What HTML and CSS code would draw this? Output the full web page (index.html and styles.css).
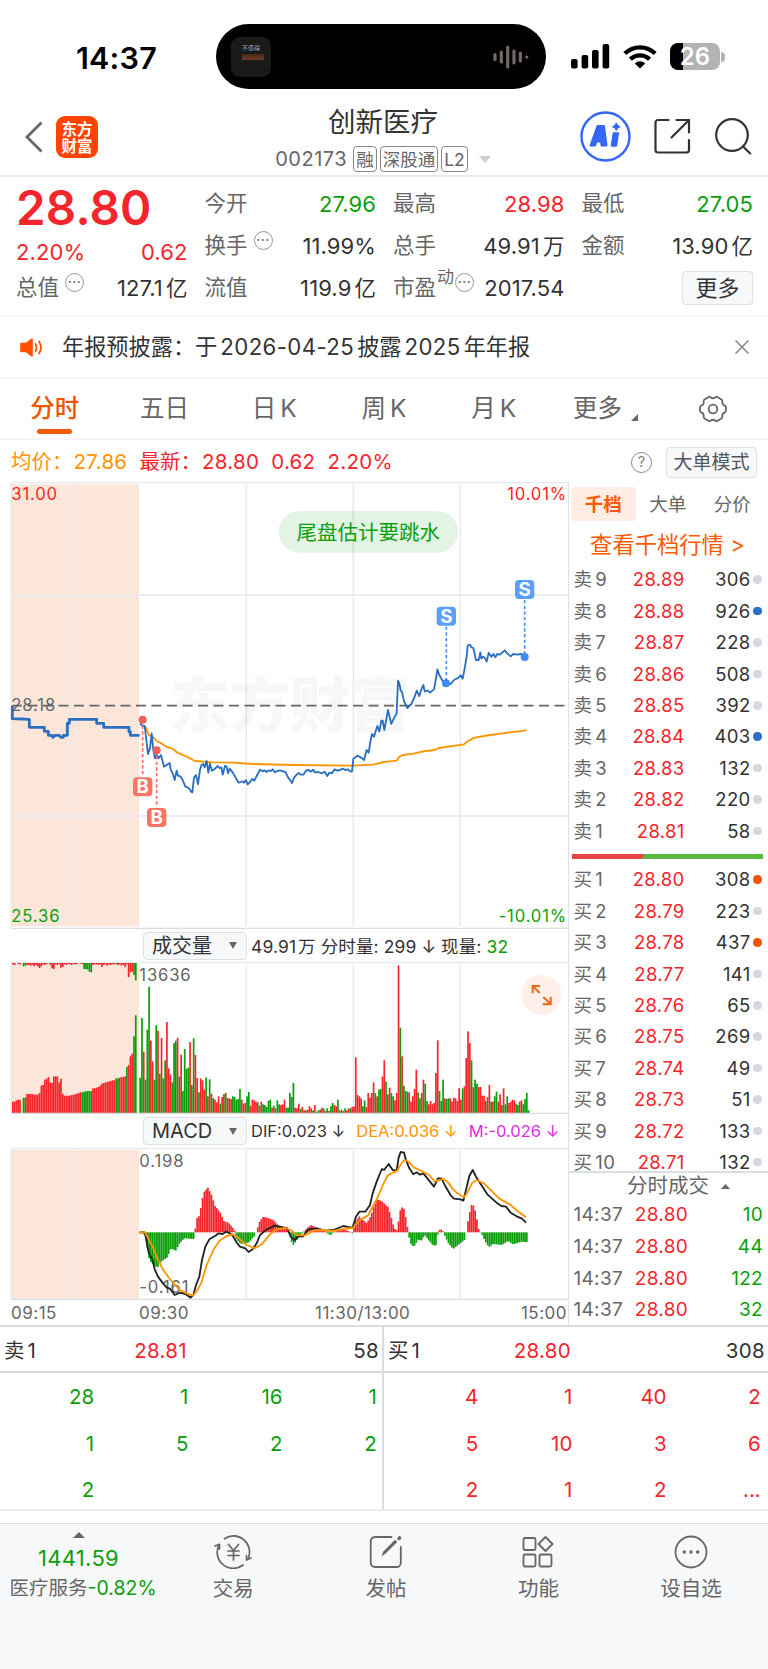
FILE: index.html
```html
<!DOCTYPE html>
<html lang="zh-CN">
<head>
    <meta charset="UTF-8">
    <meta name="viewport" content="width=device-width, initial-scale=1.0">
    <title>创新医疗 002173</title>
    <link rel="stylesheet" href="styles.css">
</head>
<body>

<div class="status-bar">
    <div class="status-time">14:37</div>
    <div class="island">
        <div class="island-cover">
            <span>不值得</span>
            <i></i>
        </div>
        <svg class="wave" width="36" height="24" viewBox="0 0 36 24" stroke="#756763" stroke-width="3.2" stroke-linecap="round">
            <path d="M2 9.5v5M8.3 7v10M14.7 2v20M21 6v12M27.4 8v8M33.8 12v.1"/>
        </svg>
    </div>
    <div class="status-icons">
        <svg width="39" height="25" viewBox="0 0 39 25">
            <rect x="0" y="15" width="6.6" height="9.5" rx="2"/>
            <rect x="10.6" y="11" width="6.6" height="13.5" rx="2"/>
            <rect x="21" y="6" width="6.6" height="18.5" rx="2"/>
            <rect x="31.6" y="0" width="6.6" height="24.5" rx="2"/>
        </svg>
        <svg class="wifi" width="34" height="25" viewBox="0 0 34 25">
            <g fill="none" stroke="#000" stroke-width="4.2">
                <path d="M1.8 9.6a21.5 21.5 0 0 1 30.4 0"/>
                <path d="M7.4 15.3a13.6 13.6 0 0 1 19.2 0"/>
            </g>
            <path d="M17 24.6l-5.2-5.2a7.4 7.4 0 0 1 10.4 0z"/>
        </svg>
        <div class="battery">26</div>
        <i class="battery-cap"></i>
    </div>
</div>

<header class="header">
    <div class="header-left">
        <svg width="18" height="32" viewBox="0 0 18 32" fill="none" stroke="#666" stroke-width="2.8"><path d="M16.5 1.5L2 16l14.500 14.500"/></svg>
        <div class="logo">东方<br>财富</div>
    </div>
    <div class="header-title">
        <h1>创新医疗</h1>
        <div class="code-row">
            <span class="code">002173</span>
            <span class="tag">融</span>
            <span class="tag">深股通</span>
            <span class="tag">L2</span>
            <svg width="12" height="7" viewBox="0 0 12 7"><path fill="#ccc" d="M0 0h12L6 7z"/></svg>
        </div>
    </div>
    <div class="header-right">
        <svg width="51" height="51" viewBox="0 0 51 51">
            <circle cx="25.500" cy="25.500" r="24" fill="none" stroke="#3467f8" stroke-width="2.400"/>
            <path fill="#3467f8" stroke="#3467f8" stroke-width="2" stroke-linejoin="round" fill-rule="evenodd" d="M10.500 34.500L17.500 15h6.500l2.500 19.500h-5l-.4-4h-4.600l-1.400 4zM17.800 26.500h3l-.5-5.500z"/>
            <path fill="#3467f8" stroke="#3467f8" stroke-width="1.600" stroke-linejoin="round" d="M33.500 22h4.800l-2 13h-4.800zM36.300 12.400l1.100 2.200 2.200 1.100-2.200 1.100-1.100 2.200-1.100-2.200-2.200-1.100 2.200-1.100z"/>
        </svg>
        <svg class="share" width="37" height="37" viewBox="0 0 37 37" fill="none" stroke="#333" stroke-width="2.200" stroke-linecap="round">
            <path d="M14.500 2H4a2.500 2.500 0 0 0-2.500 2.500V32A2.500 2.500 0 0 0 4 34.500h28.500A2.500 2.500 0 0 0 35 32V22M22.500 2H35v12.500M34 3L17.500 19.500"/>
        </svg>
        <svg width="37" height="37" viewBox="0 0 37 37" fill="none" stroke="#333" stroke-width="2.200" stroke-linecap="round">
            <circle cx="17" cy="17" r="15.800"/><path d="M28 28.500l7.200 7"/>
        </svg>
    </div>
</header>

<section class="quote">
    <div class="quote-col">
        <div class="price-now">28.80</div>
        <div class="row red low"><span>2.20%</span><span>0.62</span></div>
        <div class="row"><label>总值<i class="dots">···</i></label><span>127.1<b>亿</b></span></div>
    </div>
    <div class="quote-col">
        <div class="row"><label>今开</label><span class="green">27.96</span></div>
        <div class="row"><label>换手<i class="dots">···</i></label><span>11.99%</span></div>
        <div class="row"><label>流值</label><span>119.9<b>亿</b></span></div>
    </div>
    <div class="quote-col">
        <div class="row"><label>最高</label><span class="red">28.98</span></div>
        <div class="row"><label>总手</label><span>49.91<b>万</b></span></div>
        <div class="row"><label>市盈<sup>动</sup><i class="dots tight">···</i></label><span>2017.54</span></div>
    </div>
    <div class="quote-col">
        <div class="row"><label>最低</label><span class="green">27.05</span></div>
        <div class="row"><label>金额</label><span>13.90<b>亿</b></span></div>
        <div class="row end"><button class="more-btn">更多</button></div>
    </div>
</section>

<section class="notice">
    <svg width="23" height="19" viewBox="0 0 23 19">
        <path fill="#ff5000" stroke="#ff5000" stroke-width="1.500" stroke-linejoin="round" d="M1 5.500h5L12 1v17l-6-4.500H1z"/>
        <path fill="none" stroke="#ff5000" stroke-width="1.800" stroke-linecap="round" d="M15.500 6q2 3.500 0 7M19 3.500q4 6 0 12"/>
    </svg>
    <p>年报预披露：于<em>2026-04-25</em>披露<em>2025</em>年年报</p>
    <svg width="14" height="14" viewBox="0 0 14 14" stroke="#888" stroke-width="1.500"><path d="M.5.5l13 13M13.500.5l-13 13"/></svg>
</section>

<nav class="tabs">
    <a class="tab active">分时</a>
    <a class="tab">五日</a>
    <a class="tab">日<u>K</u></a>
    <a class="tab">周<u>K</u></a>
    <a class="tab">月<u>K</u></a>
    <a class="tab tab-more">更多<svg width="7" height="7" viewBox="0 0 7 7"><path fill="#666" d="M7 0v7H0z"/></svg></a>
    <a class="tab">
        <svg width="28" height="28" viewBox="0 0 28 28" fill="none" stroke="#666" stroke-width="1.800" stroke-linejoin="round">
            <path d="M9.500 2.200q1-.9 2 0 2.500 2 5 0 1-.9 2 0l4 2.400q1 .6.800 1.800-.4 3.300 2.500 4.300 1.200.5 1.200 1.800v3q0 1.300-1.200 1.800-2.900 1-2.500 4.300.2 1.200-.8 1.800l-4 2.400q-1 .9-2 0-2.500-2-5 0-1 .9-2 0l-4-2.400q-1-.6-.8-1.800.4-3.300-2.500-4.300Q1 16.800 1 15.500v-3q0-1.300 1.200-1.800 2.900-1 2.500-4.300-.2-1.200.8-1.800z"/>
            <circle cx="14" cy="14" r="4.300"/>
        </svg>
    </a>
</nav>

<div class="info-row">
    <span class="orange avg">均价：<em>27.86</em></span>
    <span class="red">最新：<em>28.80</em><em>0.62</em><em>2.20%</em></span>
    <i class="help">?</i>
    <button class="mode-btn">大单模式</button>
</div>

<main class="panel">
    <div class="charts">
        <svg class="price-chart" viewBox="0 6 1704 1341">
            <rect x="33" y="13" width="384" height="1326" fill="#fce6da"/>
            <path class="grid" d="M33 8H1704M33 345H1704M33 1008H1704M34 8V1345M225 13V1339M739 13V1339M1060 13V1339M1381 13V1339"/>
            <path class="grid dark" d="M33 1345H1704"/>
            <text class="watermark" x="510" y="740">东方财富</text>
            <path class="zero-line" d="M36 677H1704"/>
            <text x="34" y="60" fill="#f22">31.00</text>
            <text x="34" y="692" fill="#666">28.18</text>
            <text x="34" y="1326" fill="#0a9f0a">25.36</text>
            <text x="1701" y="60" fill="#f22" text-anchor="end">10.01%</text>
            <text x="1701" y="1326" fill="#0a9f0a" text-anchor="end">-10.01%</text>
            <polyline class="avg-line" points="434,738 440,748 446,765 458,770 470,783 484,790 500,801 516,805 532,818 560,830 585,843 640,847 700,848 760,852 880,855 1060,857 1120,854 1152,846 1162,845 1190,842 1196,832 1208,825 1240,821 1276,813 1304,810 1316,804 1392,793 1402,784 1424,773 1470,765 1530,757 1579,751"/>
            <polyline class="price-line pre" points="37,678 37,716 64,717 88,718 88,742 133,742 133,754 145,754 145,766 156,766 158,772 165,766 178,766 182,772 190,772 190,766 202,766 202,730 208,730 208,718 290,718 290,730 311,730 311,742 387,742 387,755 391,755 391,766 419,766"/>
            <polyline class="price-line" points="420,730 428,738 434,738 444,822 450,805 455,760 460,810 465,835 470,825 475,835 483,825 492,860 509,849 512,868 518,880 524,900 530,872 534,887 541,889 548,900 556,920 562,922 568,926 573,935 577,937 582,893 588,885 594,912 600,870 604,856 610,852 614,862 620,843 625,878 630,851 636,872 645,866 653,858 658,864 664,862 668,884 675,857 680,860 684,880 689,866 700,880 708,895 716,908 722,906 728,904 732,908 738,900 743,913 749,907 757,897 763,902 770,888 780,869 788,874 794,871 800,876 806,871 812,873 818,868 824,877 832,873 840,871 850,874 857,877 864,892 870,900 876,909 882,893 890,884 896,879 902,884 910,884 918,872 926,870 932,875 940,869 944,877 954,876 966,880 974,875 982,888 988,878 995,880 1004,868 1012,872 1020,870 1028,866 1036,870 1044,868 1050,874 1056,874 1060,836 1072,827 1082,832 1092,840 1100,810 1106,818 1112,780 1116,762 1122,770 1132,738 1138,755 1144,722 1148,722 1153,750 1164,690 1174,732 1180,718 1190,700 1194,602 1198,610 1202,632 1206,635 1212,664 1222,684 1234,672 1244,650 1250,632 1258,648 1264,628 1270,615 1274,634 1284,632 1290,638 1302,628 1308,595 1312,568 1318,585 1324,596 1330,606 1340,610 1352,612 1362,600 1374,594 1382,586 1388,596 1394,565 1400,530 1403,497 1410,494 1414,502 1420,504 1428,540 1436,540 1441,517 1444,536 1450,530 1456,536 1460,545 1466,518 1474,530 1480,522 1486,532 1492,522 1500,524 1514,511 1522,520 1532,529 1540,522 1550,524 1562,522 1570,524 1574,530"/>
            <g class="mark buy">
                <path d="M428 720V890M470 811V982"/>
                <circle cx="428" cy="719" r="12"/><circle cx="470" cy="811" r="12"/>
                <rect x="399" y="892" width="58" height="57" rx="12"/><rect x="441" y="984" width="58" height="57" rx="12"/>
                <text x="428" y="939">B</text><text x="470" y="1031">B</text>
            </g>
            <g class="mark sell">
                <path d="M1339 440V600M1574 360V520"/>
                <circle cx="1338" cy="610" r="12"/><circle cx="1574" cy="531" r="12"/>
                <rect x="1310" y="380" width="58" height="57" rx="12"/><rect x="1545" y="300" width="58" height="57" rx="12"/>
                <text x="1339" y="428">S</text><text x="1574" y="348">S</text>
            </g>
            <rect x="836" y="93" width="538" height="125" rx="62" fill="#0a9f0a" fill-opacity=".11"/>
            <text class="tip" x="1105" y="180">尾盘估计要跳水</text>
        </svg>

        <div class="sub-head">
            <button class="select">成交量<i></i></button>
            <span class="vol-text">49.91<b>万</b> 分时量: 299 ↓ 现量: <em class="green">32</em></span>
        </div>
        <svg class="sub-chart" viewBox="0 126 1704 456">
            <rect x="33" y="130" width="384" height="450" fill="#fce6da"/>
            <path class="grid" d="M33 128H1704M34 128V580M225 134V580M739 134V580M1060 134V580M1381 134V580"/>
            <g id="preTop"></g>
            <g id="preVolume"></g>
            <g id="volume"></g>
            <path class="grid dark" d="M33 580H1704"/>
            <text x="418" y="184" fill="#666">13636</text>
            <circle cx="1625" cy="225" r="60" fill="#fff0e9"/>
            <path class="expand" d="M1598 220V198H1620M1600 200L1619 219M1652 230V253H1628M1650 251L1630 231"/>
        </svg>

        <div class="sub-head macd-head">
            <button class="select">MACD<i></i></button>
            <span class="dif">DIF:0.023 ↓</span>
            <span class="dea">DEA:0.036 ↓</span>
            <span class="mval">M:-0.026 ↓</span>
        </div>
        <svg class="sub-chart" viewBox="0 684 1704 456">
            <rect x="33" y="690" width="384" height="446" fill="#fce6da"/>
            <path class="grid" d="M33 686H1704M34 686V1138M225 690V1136M739 690V1136M1060 690V1136M1381 690V1136"/>
            <path class="grid dark" d="M33 1138H1704"/>
            <g id="macd"></g>
            <text x="418" y="741" fill="#666">0.198</text>
            <text x="418" y="1119" fill="#666">-0.161</text>
            <polyline class="dif-line" points="418,938 430,936 436,945 446,998 458,1020 464,1048 474,1070 485,1085 500,1103 510,1106 524,1125 540,1118 556,1122 572,1133 580,1125 588,1095 598,1070 606,1020 616,980 628,958 646,947 656,940 668,942 678,935 690,940 700,950 710,968 720,980 736,985 746,996 758,988 770,970 780,945 800,928 825,917 850,922 862,925 872,950 884,960 896,948 908,950 925,928 950,925 976,932 1000,930 1030,918 1050,922 1058,922 1068,890 1078,875 1096,875 1110,855 1118,820 1130,785 1138,765 1146,747 1152,750 1166,732 1178,750 1190,752 1196,712 1202,696 1212,698 1218,720 1228,745 1240,763 1250,757 1260,764 1270,760 1282,775 1302,800 1314,775 1324,775 1338,802 1352,826 1362,836 1382,838 1390,842 1398,810 1408,768 1418,750 1428,770 1444,795 1462,823 1492,850 1504,858 1518,860 1532,878 1552,890 1566,896 1578,908"/>
            <polyline class="dea-line" points="418,938 434,936 445,955 460,985 472,1015 490,1050 510,1078 524,1093 540,1110 560,1120 578,1127 590,1115 604,1088 620,1035 640,990 658,963 680,948 700,943 716,955 740,975 765,985 785,973 810,943 830,928 855,924 872,930 890,945 915,946 940,932 960,930 1000,933 1030,927 1058,924 1080,900 1104,886 1116,864 1130,838 1152,788 1164,765 1182,757 1192,752 1204,730 1214,720 1224,724 1242,742 1272,757 1287,765 1304,784 1330,777 1342,785 1357,805 1372,820 1392,832 1404,815 1417,788 1430,780 1452,790 1472,810 1497,835 1532,855 1552,873 1578,892"/>
        </svg>
        <div class="time-axis">
            <span>09:15</span><span>09:30</span><span>11:30/13:00</span><span>15:00</span>
        </div>
    </div>

    <aside class="side">
        <div class="side-tabs"><a class="on">千档</a><a>大单</a><a>分价</a></div>
        <div class="side-link">查看千档行情 &gt;</div>
        <div class="book">
            <div class="level"><span>卖<u>9</u></span><span>28.89</span><span>306</span><i></i></div>
            <div class="level"><span>卖<u>8</u></span><span>28.88</span><span>926</span><i class="blue"></i></div>
            <div class="level"><span>卖<u>7</u></span><span>28.87</span><span>228</span><i></i></div>
            <div class="level"><span>卖<u>6</u></span><span>28.86</span><span>508</span><i></i></div>
            <div class="level"><span>卖<u>5</u></span><span>28.85</span><span>392</span><i></i></div>
            <div class="level"><span>卖<u>4</u></span><span>28.84</span><span>403</span><i class="blue"></i></div>
            <div class="level"><span>卖<u>3</u></span><span>28.83</span><span>132</span><i></i></div>
            <div class="level"><span>卖<u>2</u></span><span>28.82</span><span>220</span><i></i></div>
            <div class="level"><span>卖<u>1</u></span><span>28.81</span><span>58</span><i></i></div>
        </div>
        <div class="ratio"></div>
        <div class="book buys">
            <div class="level"><span>买<u>1</u></span><span>28.80</span><span>308</span><i class="hot"></i></div>
            <div class="level"><span>买<u>2</u></span><span>28.79</span><span>223</span><i></i></div>
            <div class="level"><span>买<u>3</u></span><span>28.78</span><span>437</span><i class="hot"></i></div>
            <div class="level"><span>买<u>4</u></span><span>28.77</span><span>141</span><i></i></div>
            <div class="level"><span>买<u>5</u></span><span>28.76</span><span>65</span><i></i></div>
            <div class="level"><span>买<u>6</u></span><span>28.75</span><span>269</span><i></i></div>
            <div class="level"><span>买<u>7</u></span><span>28.74</span><span>49</span><i></i></div>
            <div class="level"><span>买<u>8</u></span><span>28.73</span><span>51</span><i></i></div>
            <div class="level"><span>买<u>9</u></span><span>28.72</span><span>133</span><i></i></div>
            <div class="level"><span>买<u>10</u></span><span>28.71</span><span>132</span><i></i></div>
        </div>
        <div class="deal-head">分时成交<svg width="9" height="5" viewBox="0 0 9 5"><path fill="#666" d="M0 5h9L4.500 0z"/></svg></div>
        <div class="deal"><span>14:37</span><span>28.80</span><span>10</span></div>
        <div class="deal"><span>14:37</span><span>28.80</span><span>44</span></div>
        <div class="deal"><span>14:37</span><span>28.80</span><span>122</span></div>
        <div class="deal"><span>14:37</span><span>28.80</span><span>32</span></div>
    </aside>
</main>

<section class="queues">
    <div class="queue">
        <div class="queue-head"><span>卖<u>1</u></span><span class="red">28.81</span><span>58</span></div>
        <div class="queue-grid green">
            <span>28</span><span>1</span><span>16</span><span>1</span>
            <span>1</span><span>5</span><span>2</span><span>2</span>
            <span>2</span>
        </div>
    </div>
    <div class="queue">
        <div class="queue-head"><span>买<u>1</u></span><span class="red">28.80</span><span>308</span></div>
        <div class="queue-grid red">
            <span>4</span><span>1</span><span>40</span><span>2</span>
            <span>5</span><span>10</span><span>3</span><span>6</span>
            <span>2</span><span>1</span><span>2</span><span>...</span>
        </div>
    </div>
</section>

<footer class="bottom-nav">
    <div class="nav-index">
        <svg width="12" height="6" viewBox="0 0 12 6"><path fill="#666" d="M0 6h12L6 0z"/></svg>
        <strong>1441.59</strong>
        <p>医疗服务<em>-0.82%</em></p>
    </div>
    <div class="nav-item">
        <svg width="38" height="34" viewBox="0 0 38 34" fill="none" stroke="#666" stroke-width="1.700" stroke-linecap="round" stroke-linejoin="round">
            <path d="M10.500 3.700A16 16 0 0 1 34.500 22.500M1 11l4.500-1.700V14M29 30A16 16 0 0 1 5 10M37 23l-4.500 2v-4.500"/>
            <path d="M14.500 9.500l5 6 5-6M19.500 15.500V25M14 16h11M14 20.500h11"/>
        </svg>
        交易
    </div>
    <div class="nav-item">
        <svg width="34" height="34" viewBox="0 0 34 34" fill="none" stroke="#666" stroke-width="1.800" stroke-linecap="round">
            <path d="M22.500 2H6a4.300 4.300 0 0 0-4.300 4.300v21.500A4.300 4.300 0 0 0 6 32h21.500a4.300 4.300 0 0 0 4.300-4.300V12"/>
            <path fill="#666" stroke="none" d="M12.400 21.500l2-5L26 4.700l2.300 2.300-12 11.800z"/>
            <path stroke-width="3.400" d="M30 3.500l.6-.6"/>
        </svg>
        发帖
    </div>
    <div class="nav-item">
        <svg width="32" height="34" viewBox="0 0 32 34" fill="none" stroke="#666" stroke-width="1.800" stroke-linejoin="round">
            <rect x="1.500" y="3" width="12" height="12" rx="1.500"/><rect x="1.500" y="19.500" width="12" height="12" rx="1.500"/><rect x="17.500" y="19.500" width="12" height="12" rx="1.500"/>
            <path d="M23.500 2l7 7-7 7-7-7z"/>
        </svg>
        功能
    </div>
    <div class="nav-item">
        <svg width="34" height="34" viewBox="0 0 34 34">
            <circle cx="17" cy="17" r="15.500" fill="none" stroke="#666" stroke-width="1.800"/>
            <g fill="#666"><circle cx="10.300" cy="17" r="1.700"/><circle cx="17" cy="17" r="1.700"/><circle cx="23.700" cy="17" r="1.700"/></g>
        </svg>
        设自选
    </div>
</footer>

<script src="chart.js"></script>
</body>
</html>
```
FILE: styles.css
```css
/* Global Styles */
* {
    box-sizing: border-box;
}

body {
    margin: 0;
    width: 768px;
    background: #fff;
    color: #333;
    font-family: 'Inter', 'Noto Sans CJK SC', sans-serif;
    font-size: 21px;
    line-height: 1;
}

i, em {
    font-style: normal;
}

u {
    text-decoration: none;
}

svg {
    display: block;
    flex-shrink: 0;
}

button {
    font-family: inherit;
    padding: 0;
    color: #333;
    background: #f7f8fa;
    border: 1px solid #dde0e6;
    border-radius: 4px;
    line-height: 1;
}

.red { color: #f4252b; }
.green { color: #0a9f0a; }
.orange { color: #ff9500; }

/* Status bar */
.status-bar {
    display: flex;
    height: 98px;
    padding-top: 24px;
    color: #000;
}

.status-time {
    width: 216px;
    padding-left: 76px;
    line-height: 67px;
    font-size: 30.500px;
    font-weight: 600;
    letter-spacing: 0.2px;
}

.island {
    display: flex;
    align-items: center;
    justify-content: space-between;
    width: 330px;
    height: 65px;
    padding: 0 17px 0 15px;
    border-radius: 33px;
    background: #000;
}

.island-cover {
    width: 40px;
    height: 40px;
    padding: 8px 0 0 11px;
    border-radius: 9px;
    background: #1a1a1b;
    color: #aaa;
    font-size: 6px;
}

.island-cover span {
    display: block;
}

.island-cover i {
    display: block;
    width: 22px;
    height: 6px;
    margin-top: 3px;
    background: linear-gradient(#4a2a1d, #6d3a24);
}

.status-icons {
    display: flex;
    align-items: center;
    height: 65px;
    padding-left: 25px;
}

.wifi {
    margin: 0 13px;
}

.battery {
    width: 50px;
    height: 27px;
    border-radius: 8px;
    background: linear-gradient(90deg, #000 13px, #b3b3b3 13px);
    color: #fff;
    font-size: 24px;
    font-weight: 600;
    line-height: 27px;
    text-align: center;
}

.battery-cap {
    width: 4px;
    height: 10px;
    margin-left: 1px;
    border-radius: 0 5px 5px 0;
    background: #b3b3b3;
}

/* Header */
.header {
    display: grid;
    grid-template-columns: 220px 1fr 223px;
    height: 79px;
    border-bottom: 2px solid #ebebeb;
}

.header-left {
    display: flex;
    align-items: center;
    padding-left: 25px;
}

.logo {
    width: 42px;
    height: 42px;
    margin-left: 13px;
    padding-top: 5px;
    border-radius: 9px;
    background: #ff4400;
    color: #fff;
    font-size: 15.500px;
    font-weight: 700;
    line-height: 17px;
    text-align: center;
}

.header-title {
    display: flex;
    flex-direction: column;
    align-items: center;
    padding-left: 1px;
}

.header-title h1 {
    margin: 9px 0 0;
    font-size: 27.500px;
    font-weight: 400;
    line-height: 30px;
}

.code-row {
    display: flex;
    align-items: center;
    height: 26px;
    margin-top: 9px;
    color: #666;
}

.code {
    margin-right: 6px;
    font-size: 20px;
    letter-spacing: 0.5px;
}

.tag {
    height: 26px;
    margin-right: 3px;
    padding: 0 2px;
    border: 1px solid #888;
    border-radius: 4px;
    font-size: 17.500px;
    line-height: 25px;
}

.code-row svg {
    margin-left: 8px;
}

.header-right {
    display: flex;
    align-items: center;
    padding-left: 35px;
}

.share {
    margin: 0 24px 0 23px;
}

/* Quote */
.quote {
    display: grid;
    grid-template-columns: repeat(4, 1fr);
    column-gap: 17px;
    height: 140px;
    padding: 6px 15px 0 16px;
    border-bottom: 2px solid #f7f7f7;
}

.row {
    display: flex;
    align-items: center;
    justify-content: space-between;
    height: 42px;
    font-size: 22px;
    letter-spacing: 0.1px;
}

.row label {
    display: flex;
    color: #666;
    font-size: 21.500px;
    letter-spacing: 0;
}

.row b {
    margin-left: 3px;
    font-size: 21.500px;
    font-weight: 400;
}

.row.low {
    padding-top: 12px;
}

.row.end {
    justify-content: flex-end;
}

.price-now {
    height: 42px;
    line-height: 49px;
    color: #f4252b;
    font-size: 47.500px;
    font-weight: 600;
    letter-spacing: 0.2px;
}

.dots {
    width: 19px;
    height: 19px;
    margin: -4px 0 0 6px;
    border: 1.5px solid #999;
    border-radius: 50%;
    color: #777;
    font-size: 12px;
    font-weight: 700;
    line-height: 15px;
    text-align: center;
    letter-spacing: 0.5px;
}

.dots.tight {
    margin-left: 1px;
}

.row sup {
    margin: -8px 0 0 1px;
    font-size: 17px;
    line-height: 1;
}

.more-btn {
    width: 71px;
    height: 34px;
    font-size: 22px;
}

/* Notice */
.notice {
    display: flex;
    align-items: center;
    height: 62px;
    padding: 0 19px 0 20px;
    border-bottom: 2px solid #f7f7f7;
}

.notice p {
    flex: 1;
    margin: 0 0 0 19px;
    font-size: 22.200px;
}

.notice em {
    margin: 0 3px;
    letter-spacing: 0.4px;
}

/* Tabs */
.tabs {
    display: grid;
    grid-template-columns: repeat(7, 1fr);
    height: 61px;
    border-bottom: 2px solid #f5f5f5;
}

.tab {
    display: flex;
    align-items: center;
    justify-content: center;
    color: #666;
    font-size: 24.500px;
    position: relative;
}

.tab u {
    margin-left: 4px;
}

.tab.active {
    color: #ee5500;
    font-weight: 500;
}

.tab.active::after {
    content: "";
    position: absolute;
    bottom: 4px;
    width: 35px;
    height: 5px;
    border-radius: 3px;
    background: #f05a00;
}

.tab-more {
    padding-left: 4px;
}

.tab-more svg {
    margin: 18px 0 0 9px;
}

/* Info row */
.info-row {
    display: flex;
    align-items: center;
    height: 42px;
    padding: 2px 11px 0 11px;
    font-size: 20.500px;
}

.info-row .avg {
    margin-right: 12px;
}

.info-row em {
    margin-left: 1px;
    letter-spacing: 0.3px;
}

.info-row em + em {
    margin-left: 12px;
}

.help {
    width: 21px;
    height: 21px;
    margin-left: auto;
    border: 1.5px solid #888;
    border-radius: 50%;
    color: #777;
    font-size: 14px;
    line-height: 18px;
    text-align: center;
}

.mode-btn {
    width: 91px;
    height: 31px;
    margin-left: 14px;
    font-size: 19px;
    color: #555;
}

/* Charts */
.panel {
    display: flex;
    height: 845px;
    border-bottom: 2px solid #d9dce2;
}

.charts {
    width: 568px;
}

.charts svg {
    width: 568px;
}

.charts text {
    font-size: 50px;
    letter-spacing: 2.5px;
}

.price-chart {
    height: 447px;
}

.sub-chart {
    height: 152px;
}

.grid {
    fill: none;
    stroke: #e6e8ef;
    stroke-width: 4;
}

.grid.dark {
    stroke: #d9dce3;
}

.price-chart .watermark {
    fill: #000;
    fill-opacity: .03;
    font-size: 180px;
    font-weight: 900;
    letter-spacing: 0;
}

.zero-line {
    fill: none;
    stroke: #666;
    stroke-width: 5;
    stroke-dasharray: 30 16.500;
}

.price-line, .avg-line, .dif-line, .dea-line {
    fill: none;
    stroke: #2b6fc0;
    stroke-width: 5.500;
    stroke-linejoin: round;
}

.price-line.pre {
    stroke-width: 8.500;
}

.avg-line, .dea-line {
    stroke: #ff9500;
}

.dif-line {
    stroke: #222;
}

.mark path {
    fill: none;
    stroke-width: 5;
    stroke-dasharray: 10 7;
}

.charts .mark text {
    fill: #fff;
    font-weight: 700;
    text-anchor: middle;
    font-size: 56px;
    letter-spacing: 0;
}

.buy { fill: #fb7466; }
.buy path { stroke: #fb6d60; }
.sell { fill: #5a9ffb; }
.sell path { stroke: #4a92f8; }
.buy circle { fill: #ef6156; }
.sell circle { fill: #3f8af5; }

.price-chart .tip {
    fill: #0a9f0a;
    font-size: 61.500px;
    text-anchor: middle;
    letter-spacing: 0;
}

.expand {
    fill: none;
    stroke: #f06414;
    stroke-width: 6;
}

.sub-head {
    display: flex;
    align-items: center;
    height: 33px;
    padding-left: 143px;
    font-size: 17.500px;
    white-space: pre;
}

.vol-text {
    padding-top: 2px;
    letter-spacing: 0.1px;
}

.macd-head {
    height: 34px;
    font-size: 16.500px;
}

.sub-head b {
    margin-left: 2px;
    font-weight: 400;
}

.select {
    display: flex;
    align-items: center;
    width: 104px;
    height: 28px;
    margin-right: 4px;
    padding-left: 8px;
    font-size: 20px;
}

.select i {
    margin-left: auto;
    margin-right: 9px;
    border: 4px solid transparent;
    border-top: 7px solid #666;
    border-bottom: 0;
}

.dea {
    margin-left: 11px;
    color: #ff9500;
}

.mval {
    margin-left: 11px;
    color: #e02be0;
}

.time-axis {
    display: grid;
    grid-template-columns: 128px 165px 130px 1fr;
    height: 25px;
    padding: 0 1px 0 11px;
    color: #666;
    font-size: 17px;
    letter-spacing: 0.5px;
    line-height: 27px;
}

.time-axis span:nth-child(3) {
    margin-left: 11px;
}

.time-axis span:last-child {
    text-align: right;
}

/* Order book */
.side {
    flex: 1;
    padding-top: 5px;
    border-left: 1px solid #dfe1e7;
    font-size: 18.500px;
}

.side-tabs {
    display: flex;
    padding-left: 2px;
    color: #666;
}

.side-tabs a {
    width: 64.500px;
    height: 34px;
    line-height: 34px;
    text-align: center;
}

.side-tabs .on {
    border-radius: 4px;
    background: #ffece3;
    color: #ff5a00;
    font-weight: 700;
}

.side-link {
    height: 43px;
    padding-top: 4px;
    line-height: 40px;
    padding-right: 2px;
    color: #ff5a00;
    font-size: 22.300px;
    text-align: center;
}

.level {
    display: grid;
    grid-template-columns: 43px 68px 66px 9px;
    align-items: center;
    height: 31.400px;
    padding-left: 4.500px;
    letter-spacing: 0.3px;
}

.level span:first-child, .deal span:first-child {
    color: #666;
}

.level u {
    margin-left: 3px;
}

.level span:nth-child(2) {
    color: #f4252b;
    text-align: right;
}

.level span:nth-child(3) {
    text-align: right;
}

.level i {
    width: 8.500px;
    height: 8.500px;
    margin-left: 2.500px;
    border-radius: 50%;
    background: #d5d8de;
}

.level .blue { background: #2b6fc8; }
.level .hot { background: #ee5500; }

.ratio {
    height: 5px;
    margin: 7.500px 5px 5px 3px;
    background: linear-gradient(120deg, #e64545 37.500%, #58b840 37.500%);
}

.buys {
    height: 307px;
}

.deal-head {
    display: flex;
    align-items: center;
    height: 28px;
    padding-left: 58px;
    border-top: 2px solid #dcdfe4;
    color: #666;
    font-size: 20.500px;
}

.deal-head svg {
    margin-left: 12px;
}

.deal {
    display: grid;
    grid-template-columns: 50px 64.500px 75px;
    align-items: center;
    height: 31.600px;
    padding-left: 4.500px;
    font-size: 19px;
    letter-spacing: 0.3px;
}

.deal span:nth-child(2) {
    color: #f4252b;
    text-align: right;
}

.deal span:nth-child(3) {
    color: #0a9f0a;
    text-align: right;
}

/* Order queues */
.queues {
    display: grid;
    grid-template-columns: 384px 384px;
    grid-template-rows: 182px;
    height: 184px;
    border-bottom: 2px solid #ececec;
    font-size: 20.500px;
}

.queue:first-child {
    border-right: 2px solid #d9dce2;
}

.queue-head {
    display: grid;
    grid-template-columns: 92px 91px 1fr;
    align-items: center;
    height: 46px;
    padding: 4px 3px 0 4px;
    border-bottom: 2px solid #d4d7dd;
}

.queue-head u {
    margin-left: 3px;
}

.queue-head span:nth-child(n+2) {
    text-align: right;
    letter-spacing: 0.3px;
}

.queue-grid {
    display: grid;
    grid-template-columns: repeat(4, 94.200px);
    grid-auto-rows: 46.500px;
    align-items: center;
    padding-top: 1px;
    text-align: right;
}

/* Bottom nav */
.bottom-nav {
    display: grid;
    grid-template-columns: 157px repeat(4, 152.600px);
    height: 146px;
    margin-top: 12px;
    border-top: 1px solid #dcdde0;
    background: #f7f8fa;
    color: #666;
}

.nav-index {
    display: flex;
    flex-direction: column;
    align-items: center;
    padding-top: 8px;
}

.nav-index strong {
    margin-top: 9px;
    color: #0a9f0a;
    font-size: 22px;
    font-weight: 400;
    letter-spacing: 0.3px;
}

.nav-index p {
    margin: 10px 0 0 9px;
    font-size: 19.500px;
    white-space: nowrap;
}

.nav-index em {
    color: #0a9f0a;
}

.nav-item {
    display: flex;
    flex-direction: column;
    align-items: center;
    gap: 10px;
    padding-top: 11px;
    font-size: 20.500px;
}
```
FILE: chart.js
```js
const RED = '#f4252b';
const GREEN = '#0a9f0a';
const STEP = 5.345;

// positive values are red bars, negative values are green bars
const volume = [
    -106, -285, 184, -100, -250, -379, 217, 155, -100, -263, 247, -118, 225, -104, -158, 273, 134, 116, -92, -210,
    -217, 226, -110, 175, -66, -192, -133, -136, 213, -84, -224, 174, 105, -62, 104, 98, 70, -107, 50, -101,
    58, -45, 40, 32, 50, -28, 48, -57, 60, -45, 44, 42, -50, -48, -40, -42, -72, 40, 28, 30,
    -50, -63, 22, 40, 38, 34, -32, 22, 34, -26, -24, -18, -36, -40, 16, -22, 14, -38, -26, 24,
    26, 40, -16, -16, -60, -48, -90, 16, 14, 28, -12, 18, 8, -8, 10, 20, 14, -8, 24, -4,
    -8, 10, 16, -14, 6, -14, 6, -20, -30, 24, 20, -40, 8, -10, 6, -14, 8, 14, -14, 18,
    20, 167, 54, 50, 44, -20, -38, 18, 60, 46, 60, 92, -60, 50, -70, -72, 110, 158, -94, 56,
    76, -60, -50, 38, 60, 443, -256, 170, -82, -66, -64, 62, 34, 50, 72, 130, -62, -44, 60, 100,
    -88, -36, 26, 36, 26, 30, 120, 218, -66, -36, -100, 44, -42, -44, 44, 34, 46, 44, 36, 74,
    40, -74, 80, 165, 245, 210, -158, 78, -100, -88, 78, 78, 52, 52, -36, 48, 84, -34, 34, -50,
    -64, 34, 56, -24, 74, -26, -50, 30, 34, 40, 38, -28, -24, 34, 38, -26, -42, -60, -8
];

const preVolume = [
    34, 34, 38, 40, 40, 0, -46, -46, 57, 57, 57, 57, 55, 55, 55, 60, 82, 84, 100, 103,
    108, 92, 90, 110, 110, 110, 92, 103, 58, 52, 52, 52, 52, 54, 55, 56, 58, 60, 62, -62,
    -64, -65, -66, -66, -66, 74, 74, 76, 78, 82, 88, 90, 92, 93, 95, 96, 98, 98, -104, -104,
    106, 108, 108, 110, -138, 144, 170, 178, -230, -293
];

const preTop = [
    4, 6, 0, 3, 4, 0, -10, -8, 6, 6, 8, 6, 10, 6, 10, 15, 10, 4, 6, 3,
    0, 5, 16, 18, 4, 6, 3, 14, 12, 4, 6, 3, 4, 6, 3, 4, 3, 0, 2, 3,
    -18, -18, -20, -26, -28, 6, 4, 4, 6, 4, 12, 6, 4, 8, 4, 6, 4, 4, -3, 6,
    4, 8, 6, 12, 4, 42, 28, 26, -36, -52
];

// [x, value] pairs, the bars between them are interpolated
const macd = [
    [418, 0], [434, -5], [440, -50], [446, -85], [455, -95], [470, -106], [484, -85], [500, -75], [510, -48],
    [525, -55], [535, -35], [550, -18], [580, -20], [583, 3], [586, 40], [596, 50], [604, 100], [611, 124],
    [621, 134], [632, 113], [642, 80], [658, 60], [670, 32], [682, 30], [695, 15], [703, 2], [706, -20],
    [720, -35], [745, -30], [760, -12], [768, 5], [775, 30], [786, 46], [800, 44], [820, 35], [835, 18],
    [860, 14], [866, -3], [872, -28], [878, -38], [890, -20], [905, -2], [918, 12], [930, 22], [945, 15],
    [965, 8], [978, -3], [990, -8], [1000, 2], [1030, 8], [1045, 3], [1056, -4], [1062, 30], [1075, 48],
    [1085, 38], [1098, 28], [1110, 50], [1118, 75], [1130, 100], [1145, 92], [1152, 85], [1162, 75],
    [1170, 50], [1180, 12], [1190, 5], [1196, 60], [1202, 76], [1210, 70], [1220, 15], [1224, -12],
    [1232, -40], [1240, -42], [1252, -22], [1262, -25], [1272, -8], [1282, -22], [1297, -40], [1307, -38],
    [1312, 5], [1320, 10], [1328, 2], [1332, -10], [1342, -32], [1357, -50], [1372, -38], [1392, -22],
    [1398, 10], [1404, 50], [1412, 82], [1420, 80], [1428, 40], [1435, 2], [1442, -3], [1452, -25],
    [1464, -45], [1477, -35], [1502, -38], [1522, -26], [1537, -36], [1562, -28], [1583, -30]
];

function addBar(parent, x, y, height, color) {
    const bar = document.createElementNS('http://www.w3.org/2000/svg', 'rect');
    bar.setAttribute('x', x);
    bar.setAttribute('y', y);
    bar.setAttribute('width', 5.1);
    bar.setAttribute('height', height);
    bar.setAttribute('fill', color);
    parent.appendChild(bar);
}

function drawVolume(id, data, startX, baseline, down) {
    const parent = document.getElementById(id);
    data.forEach((value, i) => {
        const height = Math.abs(value);
        addBar(parent, startX + i * STEP, down ? baseline : baseline - height, height, value > 0 ? RED : GREEN);
    });
}

function drawMacd() {
    const parent = document.getElementById('macd');
    let k = 0;
    for (let x = 418; x < 1583; x += STEP) {
        while (macd[k + 1][0] < x) k++;
        const [x1, v1] = macd[k];
        const [x2, v2] = macd[k + 1];
        const value = v1 + (v2 - v1) * (x - x1) / (x2 - x1);
        addBar(parent, x, value > 0 ? 937 - value : 937, Math.abs(value), value > 0 ? RED : GREEN);
    }
}

drawVolume('volume', volume, 418, 579, false);
drawVolume('preVolume', preVolume, 36, 579, false);
drawVolume('preTop', preTop, 36, 129, true);
drawMacd();
```
